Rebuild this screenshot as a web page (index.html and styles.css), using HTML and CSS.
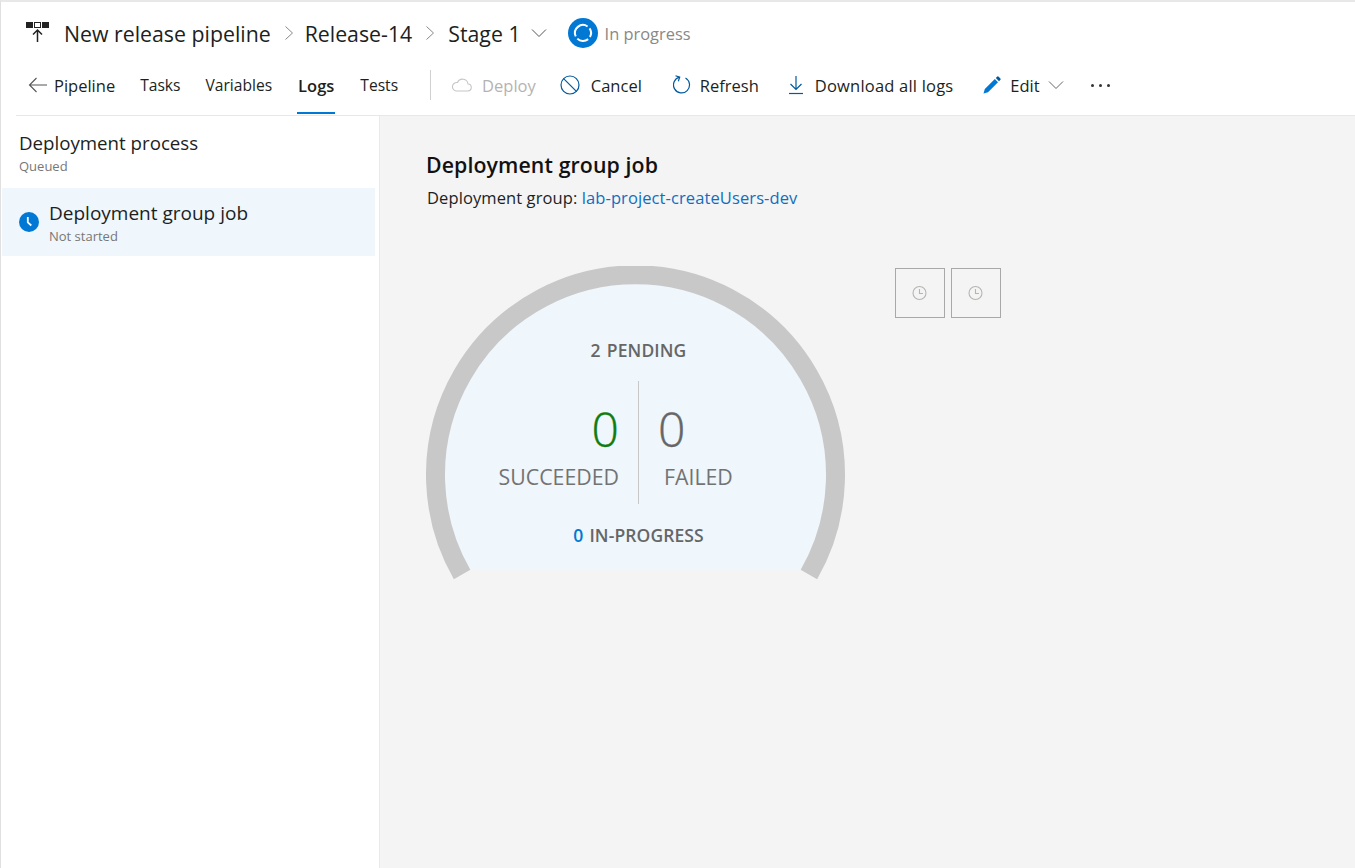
FILE: index.html
```html
<!DOCTYPE html>
<html lang="en">
<head>
<meta charset="utf-8">
<title>Release-14</title>
<link rel="stylesheet" href="styles.css">
</head>
<body>
<div class="app">
  <header class="header">
    <div class="crumbs">
      <svg class="logo" width="26" height="26" viewBox="0 0 26 26">
        <rect x="1" y="2" width="7" height="6" fill="#222"/>
        <rect x="9.500" y="2.500" width="6" height="5" fill="#fff" stroke="#222"/>
        <rect x="17" y="2" width="7" height="6" fill="#222"/>
        <path d="M12.500 22V10M8 14.500l4.500-4.500 4.500 4.500" fill="none" stroke="#222" stroke-width="1.500"/>
      </svg>
      <span class="crumb">New release pipeline</span>
      <svg class="sep sep-first" width="10" height="16" viewBox="0 0 10 16"><path d="M1.500 1.500L8.500 8l-7 6.500" fill="none" stroke="#8a8886" stroke-width="1"/></svg>
      <span class="crumb">Release-14</span>
      <svg class="sep sep-second" width="10" height="16" viewBox="0 0 10 16"><path d="M1.500 1.500L8.500 8l-7 6.500" fill="none" stroke="#8a8886" stroke-width="1"/></svg>
      <span class="crumb">Stage 1</span>
      <svg class="chev" width="16" height="10" viewBox="0 0 16 10"><path d="M1 1.500l7 7 7-7" fill="none" stroke="#555" stroke-width="1"/></svg>
      <svg class="status-icon" width="30" height="30" viewBox="0 0 30 30">
        <circle cx="15" cy="15" r="15" fill="#0078d4"/>
        <path d="M21.550 10.410A8 8 0 0 1 21.930 19M20.140 21.130A8 8 0 0 1 9.340 20.660M7.750 18.380A8 8 0 0 1 19.590 8.450" fill="none" stroke="#fff" stroke-width="2"/>
      </svg>
      <span class="status-text">In progress</span>
    </div>
    <nav class="toolbar">
      <svg class="back" width="20" height="16" viewBox="0 0 20 16"><path d="M19 8H1.500M8.500 1L1.500 8l7 7" fill="none" stroke="#555" stroke-width="1.100"/></svg>
      <span class="tab tab-pipeline">Pipeline</span>
      <span class="tab tab-tasks">Tasks</span>
      <span class="tab tab-variables">Variables</span>
      <span class="tab tab-logs">Logs</span>
      <span class="tab tab-tests">Tests</span>
      <span class="divider"></span>
      <span class="cmd cmd-deploy disabled">
        <svg width="21" height="14" viewBox="0 0 21 14"><path d="M5 13h11.500a3.500 3.500 0 0 0 .5-7 5.500 5.500 0 0 0-10.500-1.500A4.300 4.300 0 0 0 5 13z" fill="none" stroke="#c8c6c4" stroke-width="1.100"/></svg>
        Deploy
      </span>
      <span class="cmd cmd-cancel">
        <svg width="20" height="20" viewBox="0 0 20 20"><circle cx="10" cy="10" r="9" fill="none" stroke="#005a9e" stroke-width="1.200"/><path d="M3.600 3.600l12.800 12.800" stroke="#005a9e" stroke-width="1.200"/></svg>
        Cancel
      </span>
      <span class="cmd cmd-refresh">
        <svg width="19" height="20" viewBox="0 0 19 20"><path d="M6.500 2.200A8 8 0 1 0 12.500 3" fill="none" stroke="#005a9e" stroke-width="1.200"/><path d="M2.500 0.800l4.200 1.400-1.400 4" fill="none" stroke="#005a9e" stroke-width="1.200"/></svg>
        Refresh
      </span>
      <span class="cmd cmd-download">
        <svg width="16" height="20" viewBox="0 0 16 20"><path d="M8 1v13M2.500 9l5.500 5.500L13.500 9" fill="none" stroke="#005a9e" stroke-width="1.200"/><path d="M1 18.500h14" stroke="#005a9e" stroke-width="1.200"/></svg>
        Download all logs
      </span>
      <span class="cmd cmd-edit">
        <svg width="18" height="18" viewBox="0 0 18 18"><path d="M0.500 17.500l1.300-4.500L11.800 3l3.200 3.200L5 16.200z" fill="#0078d4"/><path d="M12.800 2l1.200-1.200a1.200 1.200 0 0 1 1.700 0l1.500 1.500a1.200 1.200 0 0 1 0 1.700L16 5.200z" fill="#005a9e"/></svg>
        Edit
        <svg class="edit-chev" width="16" height="10" viewBox="0 0 16 10"><path d="M1 1.500l7 7 7-7" fill="none" stroke="#666" stroke-width="1"/></svg>
      </span>
      <span class="more"><i></i><i></i><i></i></span>
    </nav>
  </header>
  <div class="body">
    <aside class="sidebar">
      <div class="process">
        <div class="item-title">Deployment process</div>
        <div class="item-sub">Queued</div>
      </div>
      <div class="job">
        <svg width="20" height="20" viewBox="0 0 20 20"><circle cx="10" cy="10" r="10" fill="#0078d4"/><path d="M8.800 5v5.300l3.500 3.200" fill="none" stroke="#fff" stroke-width="1.800"/></svg>
        <div>
          <div class="item-title">Deployment group job</div>
          <div class="item-sub">Not started</div>
        </div>
      </div>
    </aside>
    <main class="main">
      <h1 class="main-title">Deployment group job</h1>
      <p class="main-sub">Deployment group: <a class="link">lab-project-createUsers-dev</a></p>
      <div class="summary">
        <div class="gauge">
          <svg class="gauge-art" width="420" height="320" viewBox="0.500 0 420 320">
            <path d="M44.600 304 A191 191 0 1 1 375.400 304 Z" fill="#eff6fc"/>
            <path d="M36.600 308.500 A200 200 0 1 1 383.400 308.500" fill="none" stroke="#c8c8c8" stroke-width="19"/>
          </svg>
          <div class="pending">2 PENDING</div>
          <div class="counts">
            <div class="count count-left"><span class="num ok">0</span><span class="lbl">SUCCEEDED</span></div>
            <div class="count count-right"><span class="num bad">0</span><span class="lbl">FAILED</span></div>
          </div>
          <div class="inprog"><span class="blue">0</span> IN-PROGRESS</div>
        </div>
        <div class="targets">
          <div class="target"><svg width="16" height="16" viewBox="0 0 16 16"><circle cx="7.500" cy="8" r="6.500" fill="none" stroke="#b5b5b0" stroke-width="1.100"/><path d="M7.500 4V8.500h3.500" fill="none" stroke="#b5b5b0" stroke-width="1.100"/></svg></div>
          <div class="target"><svg width="16" height="16" viewBox="0 0 16 16"><circle cx="7.500" cy="8" r="6.500" fill="none" stroke="#b5b5b0" stroke-width="1.100"/><path d="M7.500 4V8.500h3.500" fill="none" stroke="#b5b5b0" stroke-width="1.100"/></svg></div>
        </div>
      </div>
    </main>
  </div>
</div>
</body>
</html>
```
FILE: styles.css
```css
* { box-sizing: border-box; }
html, body { margin: 0; height: 100%; }
body { font-family: "Open Sans", "Noto Sans", sans-serif; color: #201f1e; background: #fff; overflow: hidden; }
.app { display: flex; flex-direction: column; height: 868px; border-top: 2px solid #e8e8e8; border-left: 1px solid #e0e0e0; }
.header { margin-left: 15px; height: 114px; border-bottom: 1px solid #e8e8e8; flex: none; }
.crumbs { display: flex; align-items: center; height: 62px; padding: 0 0 0 9px; }
.logo { margin-right: 13px; }
.crumb { font-size: 21.300px; }
.sep { margin: 0 12px 0 13px; }
.sep-first { margin-right: 11px; }
.sep-second { margin-right: 13px; }
.chev { margin-left: 10px; margin-right: 21px; }
.status-icon { margin-right: 7px; }
.status-text { font-size: 16.400px; color: #8a8886; }
.toolbar { display: flex; align-items: center; height: 50px; padding: 0 0 8px 12px; font-size: 16.500px; }
.tab { display: flex; align-items: center; height: 42px; font-size: 15.600px; }
.back { margin-right: 6px; }
.tab-pipeline { font-size: 16.500px; margin-right: 25px; }
.tab-tasks { margin-right: 25px; }
.tab-variables { margin-right: 26px; }
.tab-logs { font-size: 16.500px; font-weight: 600; margin-right: 26px; position: relative; }
.tab-logs::after { content: ""; position: absolute; left: -1px; right: -1px; bottom: -8px; height: 2px; background: #0078d4; }
.tab-tests { margin-right: 32px; }
.divider { width: 1px; height: 30px; background: #d0d0d0; margin-right: 20px; }
.cmd { display: flex; align-items: center; margin-right: 30px; }
.cmd-deploy { gap: 10px; margin-right: 24px; }
.cmd-cancel { gap: 11px; margin-right: 31px; }
.cmd-refresh { gap: 8px; margin-right: 29px; }
.cmd-download { gap: 11px; letter-spacing: 0.2px; margin-right: 30px; }
.cmd-edit { gap: 9px; margin-right: 0; }
.disabled { color: #b5b3b1; }
.edit-chev { margin-left: -1px; }
.more { display: flex; gap: 5px; margin-left: 27px; }
.more i { width: 3px; height: 3px; border-radius: 50%; background: #333; }
.body { flex: 1; display: flex; min-height: 0; }
.sidebar { width: 379px; flex: none; border-right: 1px solid #eaeaea; padding-top: 14px; }
.process { padding-left: 18px; height: 58px; }
.process .item-sub { margin-top: 1px; }
.item-title { font-size: 19px; line-height: 25px; }
.process .item-title { font-size: 18.700px; }
.item-sub { font-size: 13px; color: #777; line-height: 20px; }
.job { display: flex; align-items: center; gap: 10px; width: 373px; height: 68px; margin-left: 1px; padding: 0 0 0 17px; background: #eff6fc; }
.job > div { padding-top: 3px; }
.main { flex: 1; background: #f4f4f4; padding: 35px 0 0 46px; }
.main-title { margin: 0; font-size: 21.300px; font-weight: 600; line-height: 28px; letter-spacing: 0.1px; color: #111; }
.main-sub { margin: 8px 0 0 1px; font-size: 16.500px; line-height: 22px; letter-spacing: 0.1px; }
.link { color: #106ebe; }
.summary { display: flex; align-items: flex-start; margin-top: 57px; }
.gauge { position: relative; width: 420px; height: 320px; flex: none; text-align: center; color: #666; padding-top: 72px; }
.gauge-art { position: absolute; left: 0; top: 0; }
.pending, .inprog { position: relative; padding-left: 5px; font-size: 17.500px; font-weight: 600; line-height: 24px; letter-spacing: 0.1px; word-spacing: 1.500px; }
.counts { position: relative; display: flex; margin-top: 19px; }
.count { height: 123px; display: flex; flex-direction: column; padding-top: 18px; }
.count-left { width: 213px; align-items: flex-end; border-right: 1px solid #c8c8c8; padding-right: 19px; }
.count-right { align-items: flex-start; padding-left: 19px; }
.num { font-size: 48px; font-weight: 300; line-height: 60px; -webkit-text-stroke: 0.4px; }
.ok { color: #107c10; }
.bad { color: #666; }
.lbl { font-size: 21.300px; line-height: 28px; margin-top: 4px; color: #737373; }
.count-right .lbl { margin-left: 6px; }
.inprog { margin-top: 19px; }
.blue { color: #0078d4; }
.targets { display: flex; gap: 6px; margin: 2px 0 0 49px; }
.target { width: 50px; height: 50px; border: 1px solid #a8a8a8; display: flex; align-items: center; justify-content: center; }
```
